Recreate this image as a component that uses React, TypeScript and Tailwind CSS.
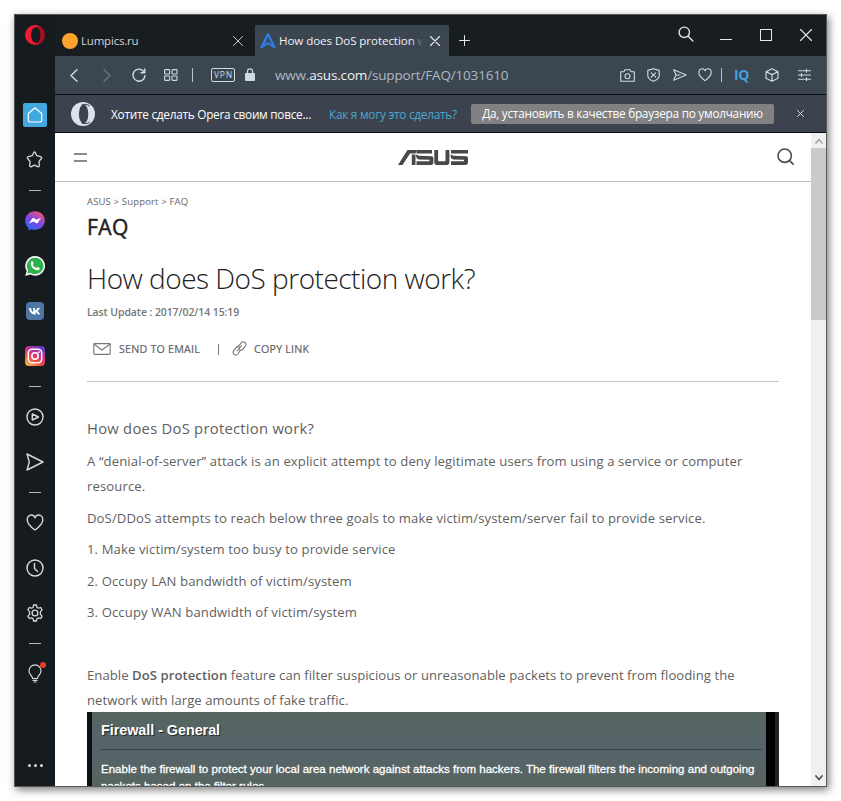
import React from "react";

type IconProps = { w: number; h: number; className?: string; sw?: number; children: React.ReactNode };

function Icon({ w, h, className = "", sw = 1.2, children }: IconProps) {
  return (
    <svg
      width={w}
      height={h}
      viewBox={`0 0 ${w} ${h}`}
      fill="none"
      stroke="currentColor"
      strokeWidth={sw}
      strokeLinecap="round"
      strokeLinejoin="round"
      className={`block shrink-0 ${className}`}
    >
      {children}
    </svg>
  );
}

function Slot({ children, className = "h-[45px]" }: { children: React.ReactNode; className?: string }) {
  return <div className={`flex w-10 shrink-0 items-center justify-center pr-px ${className}`}>{children}</div>;
}

function Dash() {
  return (
    <div className="flex h-4 w-10 shrink-0 items-center justify-center">
      <div className="h-px w-3 bg-[#b4b9bd]" />
    </div>
  );
}

const heart = "M7 12.7 C5.5 11.6 0.8 8.2 0.8 4.5 C0.8 2.3 2.3 0.8 4.1 0.8 C5.4 0.8 6.5 1.6 7 2.8 C7.5 1.6 8.6 0.8 9.9 0.8 C11.7 0.8 13.2 2.3 13.2 4.5 C13.2 8.2 8.5 11.6 7 12.7Z";

function Sidebar() {
  return (
    <aside className="flex w-10 shrink-0 flex-col bg-[#151b1f] text-[#d5dadd]">
      <Slot className="mb-[37px] h-[41px] pb-px">
        <svg width="20" height="20" viewBox="0 0 20 20" className="block">
          <path fill="#a8101f" d="M9 1.200c5-2.200 10.800 2 10.800 8.800s-5.800 11-10.800 8.800Z" />
          <path fill="#ee1c30" d="M10 0a10 10 0 1 0 0 20c2 0 3.500-.6 5-1.700c-4.500 1.500-8.800-2.500-8.800-8.300S10.500.200 15 1.700C13.500.600 12 0 10 0Z" />
          <ellipse cx="10.800" cy="10" rx="4.600" ry="7.700" fill="#151b1f" />
        </svg>
      </Slot>
      <Slot className="h-11">
        <div className="flex size-6 items-center justify-center rounded-[2px] bg-[#41a8e0] text-white">
          <Icon w={16} h={16}>
            <path d="M1.300 6.500L8 .8l6.700 5.700v6.700a1.800 1.800 0 0 1-1.800 1.800H3.100a1.800 1.800 0 0 1-1.800-1.800Z" />
          </Icon>
        </div>
      </Slot>
      <Slot>
        <Icon w={17} h={17} sw={1.300}>
          <path d="M8.500 1c.4 0 .6.300.8.700l1.500 3 3.700 1c1.200.3 1.500 1 .9 1.800L13 10.300l.3 4c0 1.200-.6 1.700-1.600 1.300L8.500 14.200l-3.200 1.400c-1 .4-1.600-.1-1.600-1.300l.3-4L1.600 7.500C1 6.700 1.300 6 2.500 5.700l3.700-1 1.500-3c.2-.4.4-.7.8-.7Z" />
        </Icon>
      </Slot>
      <Dash />
      <Slot>
        <svg width="20" height="20" viewBox="0 0 20 20" className="block">
          <defs>
            <linearGradient id="messenger" x1="0.200" y1="1" x2="0.800" y2="0">
              <stop offset="0" stopColor="#2467f5" />
              <stop offset=".5" stopColor="#8048e0" />
              <stop offset="1" stopColor="#fb5270" />
            </linearGradient>
          </defs>
          <path fill="url(#messenger)" d="M10 .3C4.400.300.200 4.300.200 9.700c0 2.900 1.200 5.300 3.200 7v2.800l3-1.300c1.100.4 2.300.6 3.600.6c5.600 0 9.800-3.900 9.800-9.300S15.600.300 10 .3Z" />
          <path fill="#fff" d="M4 12.500L7.200 7.600c.4-.6 1.300-.8 1.900-.4l2.200 1.600L16 6.800l-3.200 4.900c-.5.700-1.300.8-1.900.4L8.700 10.500Z" />
        </svg>
      </Slot>
      <Slot>
        <svg width="20" height="20" viewBox="0 0 20 20" className="block">
          <path fill="#f4f6f5" d="M10.100 0a9.900 9.900 0 0 0-8.500 14.900L.2 20l5.200-1.400A9.900 9.900 0 1 0 10.100 0Z" />
          <path fill="#2db14a" d="M10.100 1.700a8.200 8.200 0 0 0-6.900 12.700l-.9 3.200 3.300-.9A8.200 8.200 0 1 0 10.100 1.700Z" />
          <path fill="#fff" d="M6.400 5.600c.5-.6 1.200-.5 1.400 0l.7 1.700c.1.500-.7 1.100-.7 1.400c.7 1.500 1.900 2.500 3.500 3.200c.4 0 .9-1.100 1.300-1l1.900.9c.5.300.2 1.500-.6 2.100c-1.200.9-3.200.3-5.100-.9C6.900 11.600 4.500 8.100 6.400 5.600Z" />
        </svg>
      </Slot>
      <Slot>
        <svg width="18" height="18" viewBox="0 0 18 18" className="block">
          <rect width="18" height="18" rx="4" fill="#4d76a5" />
          <path fill="#fff" d="M9.700 12.500h-.8C5.600 12.500 3.500 9.900 3 6h2c.3 2.400 1.200 3.800 2.300 4.200V6h1.900v2.500C10.300 8.300 11.100 7.400 11.500 6h1.900c-.3 1.500-1.200 2.600-2 3.100c.9.400 1.900 1.500 2.600 3.400h-2.100c-.5-1.300-1.300-2.100-2.200-2.300Z" />
          <path stroke="#fff" strokeWidth="1.200" d="M10 9.200L13.500 6" />
        </svg>
      </Slot>
      <Slot>
        <svg width="20" height="20" viewBox="0 0 20 20" className="block">
          <defs>
            <linearGradient id="insta" x1="0.100" y1="1" x2="0.700" y2="0">
              <stop offset="0" stopColor="#fdbd45" />
              <stop offset=".35" stopColor="#f2503d" />
              <stop offset=".65" stopColor="#cf2d90" />
              <stop offset="1" stopColor="#643ccb" />
            </linearGradient>
          </defs>
          <rect width="20" height="20" rx="4" fill="url(#insta)" />
          <rect x="3.300" y="3.300" width="13.400" height="13.400" rx="3.700" fill="none" stroke="#fff" strokeWidth="1.500" />
          <circle cx="10" cy="10" r="3.200" fill="none" stroke="#fff" strokeWidth="1.500" />
          <circle cx="13.800" cy="6.200" r=".9" fill="#fff" />
        </svg>
      </Slot>
      <Dash />
      <Slot>
        <Icon w={18} h={18} sw={1.400}>
          <circle cx="9" cy="9" r="8" />
          <path d="M6.300 6v6l6.200-3Z" />
        </Icon>
      </Slot>
      <Slot>
        <Icon w={18} h={18} sw={1.400}>
          <path d="M1 1l16 8L1 17l2.300-8Z" />
        </Icon>
      </Slot>
      <Dash />
      <Slot>
        <svg width="18" height="17" viewBox="0 0 14 13.500" fill="none" stroke="currentColor" strokeWidth="1.100" className="block">
          <path d={heart} />
        </svg>
      </Slot>
      <Slot>
        <Icon w={18} h={18} sw={1.400}>
          <circle cx="9" cy="9" r="8" />
          <path d="M8.500 4.500v5l3 3" />
        </Icon>
      </Slot>
      <Slot>
        <Icon w={18} h={18} sw={1.300}>
          <circle cx="9" cy="9" r="2.900" />
          <path d="M7.600 1h2.800l.5 2.300 1.500.9 2.300-.7 1.400 2.400-1.700 1.700v2.800l1.700 1.700-1.400 2.400-2.300-.7-1.500.9-.5 2.300H7.600l-.5-2.300-1.500-.9-2.300.7-1.400-2.400 1.700-1.700V7.600L1.900 5.900l1.400-2.400 2.300.7 1.500-.9Z" />
        </Icon>
      </Slot>
      <Dash />
      <Slot>
        <div className="relative">
          <Icon w={14} h={19} sw={1.200}>
            <path d="M4.600 14.500C4.600 12 1 10.500 1 6.900a6 6 0 0 1 12 0c0 3.600-3.600 5.100-3.600 7.600ZM5 16.300h4M6 18h2" />
          </Icon>
          <div className="absolute -top-[2px] left-[12px] size-[6px] rounded-full bg-[#f03a2e]" />
        </div>
      </Slot>
      <div className="mt-auto flex h-[41px] items-center justify-center gap-[3px]">
        <div className="size-[3px] rounded-full bg-[#d5dadd]" />
        <div className="size-[3px] rounded-full bg-[#d5dadd]" />
        <div className="size-[3px] rounded-full bg-[#d5dadd]" />
      </div>
    </aside>
  );
}

function TabBar() {
  return (
    <div className="flex h-[41px] shrink-0 items-end bg-[#181d20] text-[#e3e6e8]">
      <div className="flex h-[31px] w-[200px] items-center pl-[7px]">
        <div className="size-4 rounded-full bg-[#fba32c]" />
        <span className="ml-[3px] text-[11.500px] tracking-[-0.200px] text-[#d0d4d7]">Lumpics.ru</span>
        <Icon w={10} h={10} sw={1} className="mr-3 ml-auto text-[#c4c8cb]">
          <path d="M.5.500l9 9M9.500.500l-9 9" />
        </Icon>
      </div>
      <div className="flex h-[31px] w-[194px] items-center bg-[#3c4651] pl-[5px]">
        <Icon w={16} h={16} sw={2} className="text-[#2b7fe8]">
          <path d="M1.300 14.500L8 1l6.700 13.500L8 10Z" />
          <path d="M8 1.500L4.500 12" strokeWidth="1" />
        </Icon>
        <div className="relative ml-[3px] h-5 w-[144px] overflow-hidden">
          <span className="block text-[11.600px] leading-5 tracking-[-0.080px] whitespace-nowrap text-[#eef0f2]">How does DoS protection work?</span>
          <div className="absolute top-0 right-0 h-5 w-[12px] bg-linear-to-r from-transparent to-[#3c4651]" />
        </div>
        <Icon w={10} h={10} sw={1.200} className="ml-[7px]">
          <path d="M.5.500l9 9M9.500.500l-9 9" />
        </Icon>
      </div>
      <div className="flex h-[31px] items-center pl-[10px]">
        <Icon w={11} h={11} sw={1}>
          <path d="M5.500.500v10M.5 5.500h10" />
        </Icon>
      </div>
      <div className="mr-[14px] mb-[7px] ml-auto flex h-[28px] items-center">
        <Icon w={16} h={16} sw={1.400} className="mr-[26px] mb-[2px]">
          <circle cx="6.300" cy="6.300" r="5.200" />
          <path d="M10.200 10.200l4.700 4.700" />
        </Icon>
        <div className="mt-[9px] mr-[28px] h-px w-3 bg-[#e3e6e8]" />
        <div className="mr-[28px] size-3 border border-[#e3e6e8]" />
        <Icon w={12} h={12} sw={1.100}>
          <path d="M.5.500l11 11M11.500.500l-11 11" />
        </Icon>
      </div>
    </div>
  );
}

function AddressBar() {
  return (
    <div className="flex h-[38px] shrink-0 items-center bg-[#3c4651] text-[#cfdae1]">
      <Icon w={8} h={13} sw={1.500} className="ml-[15px]">
        <path d="M7 .8L1 6.500l6 5.700" />
      </Icon>
      <Icon w={8} h={13} sw={1.300} className="ml-[25px] text-[#6b7781]">
        <path d="M1 .8l6 5.700-6 5.700" />
      </Icon>
      <Icon w={14} h={14} sw={1.400} className="ml-[21px]">
        <path d="M12.300 4.300A6 6 0 1 0 13 7.600M12.800 1v3.800H9" />
      </Icon>
      <Icon w={14} h={12} sw={1.100} className="ml-[18px]">
        <rect x=".6" y=".6" width="5" height="4.400" rx=".6" />
        <rect x="8" y=".6" width="5" height="4.400" rx=".6" />
        <rect x=".6" y="7" width="5" height="4.400" rx=".6" />
        <rect x="8" y="7" width="5" height="4.400" rx=".6" />
      </Icon>
      <div className="ml-[14px] h-[14px] w-px bg-[#b9c5cd]" />
      <div className="ml-[18px] flex h-[14px] w-6 items-center justify-center rounded-[2px] border border-[#cfdae1] pl-px text-[8.500px] leading-none tracking-[0.800px]">VPN</div>
      <svg width="10" height="13" viewBox="0 0 10 13" className="mb-px ml-[10px] block">
        <rect y="5" width="10" height="8" rx="1" fill="#cfdae1" />
        <path d="M2.500 5.500V3.300a2.500 2.500 0 0 1 5 0v2.200" fill="none" stroke="#cfdae1" strokeWidth="1.200" />
      </svg>
      <div className="ml-5 text-[13.500px] tracking-[-0.170px] whitespace-nowrap text-[#adb9c2]">
        www.<span className="text-[#f0f3f5]">asus.com</span>/support/FAQ/1031610
      </div>
      <Icon w={15} h={13} sw={1.100} className="ml-auto">
        <path d="M.7 2.800h3.200L5 .7h5l1.100 2.100h3.200v9.500H.7Z" />
        <circle cx="7.500" cy="7.200" r="2.500" />
      </Icon>
      <Icon w={13} h={14} sw={1.100} className="ml-3">
        <path d="M6.500.7l5.700 1.700v5.200c0 2.500-2.400 4.500-5.700 5.700C3.200 12.100.800 10.100.800 7.600V2.400ZM4.300 4.800l4.400 4.400M8.700 4.800L4.300 9.200" />
      </Icon>
      <Icon w={14} h={12} sw={1.100} className="ml-[13px]">
        <path d="M.7.700L13.200 6 .7 11.300 3 6ZM3 6h4" />
      </Icon>
      <Icon w={14} h={14} sw={1.100} className="ml-[11px]">
        <path d={heart} />
      </Icon>
      <div className="ml-[9px] h-[14px] w-px bg-[#b9c5cd]" />
      <div className="ml-[12px] w-4 text-[14px] leading-none font-bold tracking-[-0.300px] text-[#439fdc]">IQ</div>
      <Icon w={14} h={14} sw={1.200} className="ml-[15px]">
        <path d="M7 .8l6 2.900v6.600L7 13.200 1 10.300V3.700ZM1 3.700L7 6.600l6-2.900M7 6.600v6.600" />
      </Icon>
      <Icon w={13} h={12} sw={1.100} className="mr-[15px] ml-[19px]">
        <path d="M.5 1.800h12M.5 6h12M.5 10.200h12M8.500.300v3M3.500 4.500v3M8.500 8.700v3" />
      </Icon>
    </div>
  );
}

function DefaultBrowserBar() {
  return (
    <div className="flex h-[39px] shrink-0 items-center border-y border-[#080c10] bg-[#3c434e] text-[11.800px] tracking-[-0.260px] whitespace-nowrap">
      <svg width="24" height="24" viewBox="0 0 24 24" className="ml-4 block">
        <circle cx="12" cy="12" r="12" fill="#dde2ea" />
        <ellipse cx="12.600" cy="12" rx="4.700" ry="9.500" fill="#3c434e" />
        <path d="M10.500 3c2.500-1 6.200-.8 8.300 1M10.500 21c2.500 1 6.200.8 8.300-1" fill="none" stroke="#3c434e" strokeWidth="1" />
      </svg>
      <div className="ml-4 w-[218px] pt-[2px] text-white">Хотите сделать Opera своим повсе...</div>
      <div className="w-[142px] pt-[2px] text-[#4ba6cf]">Как я могу это сделать?</div>
      <div className="flex h-5 w-[303px] items-center justify-center rounded-[2px] bg-[#818181] text-white">
        Да, установить в качестве браузера по умолчанию
      </div>
      <Icon w={7} h={7} sw={1} className="ml-[23px] text-[#d9dde0]">
        <path d="M.5.500l6 6M6.500.500l-6 6" />
      </Icon>
    </div>
  );
}

function AsusHeader() {
  return (
    <header className="flex h-[49px] shrink-0 items-center justify-between border-b border-[#bdbdbd] pr-[17px] pl-[19px]">
      <div className="flex w-[13px] flex-col gap-[5px]">
        <div className="h-[2px] bg-[#8a8a8a]" />
        <div className="h-[2px] bg-[#8a8a8a]" />
      </div>
      <svg width="70" height="15" viewBox="0 0 70 15" fill="#484848" className="ml-[2px] block">
        <path d="M9.500 0h9.500l-1.500 3.500h-5.500L4.500 15H0Z" />
        <path d="M13.800 4.500h3.700V15h-3.700Z" />
        <path d="M18.500 0H34v3.500H18.500ZM18 4.500l3 1.300 13 .4c1 .2 1.400 1 1.400 2.300v3.800c0 1.700-1 2.700-2.600 2.700H18.500v-3.700H31.500V9.800l-10.500-.4c-2-.1-3-1.600-3-4.900Z" />
        <path d="M36.300 0h3.800v11.300H47.500V0h3.900v12.300c0 1.700-1 2.700-2.600 2.700H38.800c-1.600 0-2.500-1-2.500-2.700Z" />
        <path d="M53 0h17v3.500H53ZM52.500 4.500l3 1.300 13 .4c1 .2 1.500 1 1.500 2.300v3.800c0 1.700-1 2.700-2.600 2.700H53v-3.700h13V9.800l-10.500-.4c-2-.1-3-1.600-3-4.900Z" />
      </svg>
      <Icon w={17} h={17} sw={1.600} className="mb-px text-[#4c4c4c]">
        <circle cx="7.700" cy="7.700" r="6.700" />
        <path d="M12.600 12.600l3.500 3.500" />
      </Icon>
    </header>
  );
}

function RouterPanel() {
  return (
    <div className="flex h-[75px] shrink-0 overflow-hidden bg-[#56646a]">
      <div className="w-[5px] shrink-0 bg-[#0b1216]" />
      <div className="min-w-0 flex-1 bg-linear-to-b from-[#56665f] via-[#56646b] to-[#58645f] pr-1 pl-[9px] font-['Liberation_Sans',sans-serif] whitespace-nowrap text-white">
        <div className="flex h-[38px] items-center border-b border-[#39464c] text-[14.400px] font-bold tracking-[-0.050px] text-shadow-[1px_1px_1px_#222]">Firewall - General</div>
        <div className="mt-[11px] text-[11.500px] leading-[17px] tracking-[0.023px] [-webkit-text-stroke:0.300px_white]">
          <div>Enable the firewall to protect your local area network against attacks from hackers. The firewall filters the incoming and outgoing</div>
          <div>packets based on the filter rules.</div>
        </div>
      </div>
      <div className="w-[9px] shrink-0 bg-black" />
      <div className="w-[4px] shrink-0 bg-[#20262b]" />
    </div>
  );
}

function Article() {
  return (
    <main className="flex min-h-0 flex-1 flex-col overflow-hidden pr-8 pl-8 text-[#5f5f5f]">
      <div className="mt-[12px] shrink-0 text-[9.500px] leading-[16px] tracking-[0.160px] text-[#666]">ASUS &gt; Support &gt; FAQ</div>
      <div className="mt-px shrink-0 text-[21px] leading-[32px] tracking-[0.450px] text-[#222] [-webkit-text-stroke:0.500px_#222]">FAQ</div>
      <h1 className="mt-[15px] shrink-0 text-[28px] leading-[40px] font-light tracking-[-0.500px] whitespace-nowrap text-[#222]">How does DoS protection work?</h1>
      <div className="mt-[5px] shrink-0 text-[10.500px] leading-[18px] font-semibold tracking-[-0.100px] text-[#777]">Last Update : 2017/02/14 15:19</div>
      <div className="mt-[18px] flex h-5 shrink-0 items-center text-[10.700px] tracking-[0.220px] text-[#666] [-webkit-text-stroke:0.200px_#666]">
        <Icon w={18} h={12} sw={1.100} className="mb-px ml-[6px] text-[#777]">
          <rect x=".8" y=".6" width="16.400" height="10.800" rx=".8" />
          <path d="M1.200 1.200L9 7l7.800-5.800" />
        </Icon>
        <span className="ml-2 w-[82px] whitespace-nowrap">SEND TO EMAIL</span>
        <div className="ml-[17px] h-[11px] w-px bg-[#777]" />
        <Icon w={15} h={15} sw={1.100} className="mr-[7px] mb-[2px] ml-[13px] text-[#777]">
          <path d="M6.300 5.500l2.800-3.700c.9-1.200 2.300-1.300 3.500-.5s1.600 2.300.8 3.500l-2.500 3.300c-.9 1.200-2.300 1.300-3.500.5" />
          <path d="M8.300 9.500l-2.500 3.500c-.9 1.200-2.300 1.400-3.500.6S.700 11.300 1.500 10.100L4 6.700c.9-1.200 2.300-1.300 3.500-.5M5.200 10l4.200-5.500" />
        </Icon>
        <span className="mt-px whitespace-nowrap">COPY LINK</span>
      </div>
      <div className="mt-[22px] h-px shrink-0 bg-[#c4c4c4]" />
      <h2 className="mt-[33px] shrink-0 text-[14.800px] leading-[26px] tracking-[0.250px] whitespace-nowrap">How does DoS protection work?</h2>
      <div className="-mb-px mt-2 flex shrink-0 flex-col gap-[6.500px] text-[13.100px] leading-[25px] tracking-[0.115px] whitespace-nowrap">
        <p>
          A “denial-of-server” attack is an explicit attempt to deny legitimate users from using a service or computer
          <br />
          resource.
        </p>
        <p>DoS/DDoS attempts to reach below three goals to make victim/system/server fail to provide service.</p>
        <p>1. Make victim/system too busy to provide service</p>
        <p>2. Occupy LAN bandwidth of victim/system</p>
        <p>3. Occupy WAN bandwidth of victim/system</p>
        <p>&nbsp;</p>
        <p className="tracking-[0.060px]">
          Enable <b className="font-semibold">DoS protection</b> feature can filter suspicious or unreasonable packets to prevent from flooding the
          <br />
          network with large amounts of fake traffic.
        </p>
      </div>
      <RouterPanel />
    </main>
  );
}

function Scrollbar() {
  return (
    <div className="flex w-[15px] shrink-0 flex-col items-center bg-[#f0f0f0] text-[#555]">
      <div className="flex h-[15px] items-center">
        <Icon w={8} h={6} sw={1.700} className="text-[#aaa]">
          <path d="M1 5l3-3.500L7 5" />
        </Icon>
      </div>
      <div className="h-[172px] w-full bg-[#cacaca]" />
      <div className="mt-auto flex h-[16px] items-center">
        <Icon w={8} h={6} sw={1.800}>
          <path d="M1 1l3 3.500L7 1" />
        </Icon>
      </div>
    </div>
  );
}

export default function App() {
  return (
    <div className="h-[801px] w-[841px] overflow-hidden bg-white p-[14px] font-['Open_Sans','Noto_Sans',sans-serif]">
      <div className="flex h-[773px] w-[813px] overflow-hidden border border-[#55585a] bg-white shadow-[2px_3px_8px_rgba(0,0,0,0.500)]">
        <Sidebar />
        <div className="flex min-w-0 flex-1 flex-col">
          <TabBar />
          <AddressBar />
          <DefaultBrowserBar />
          <div className="flex min-h-0 flex-1">
            <div className="flex min-w-0 flex-1 flex-col">
              <AsusHeader />
              <Article />
            </div>
            <Scrollbar />
          </div>
        </div>
      </div>
    </div>
  );
}
